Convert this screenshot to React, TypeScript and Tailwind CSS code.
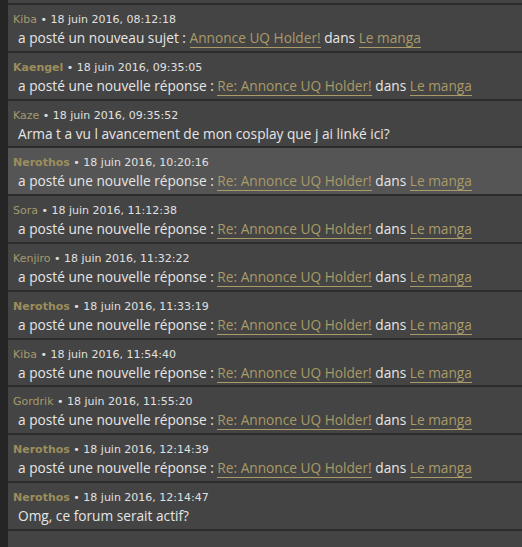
import React from "react";

type Row = {
  user: string;
  bold?: boolean;
  date: string;
  kind: "sujet" | "reponse" | "msg";
  msg?: string;
  hl?: boolean;
};

const rows: Row[] = [
  { user: "Kiba", date: "18 juin 2016, 08:12:18", kind: "sujet" },
  { user: "Kaengel", bold: true, date: "18 juin 2016, 09:35:05", kind: "reponse" },
  { user: "Kaze", date: "18 juin 2016, 09:35:52", kind: "msg", msg: "Arma t a vu l avancement de mon cosplay que j ai linké ici?" },
  { user: "Nerothos", bold: true, date: "18 juin 2016, 10:20:16", kind: "reponse", hl: true },
  { user: "Sora", date: "18 juin 2016, 11:12:38", kind: "reponse" },
  { user: "Kenjiro", date: "18 juin 2016, 11:32:22", kind: "reponse" },
  { user: "Nerothos", bold: true, date: "18 juin 2016, 11:33:19", kind: "reponse" },
  { user: "Kiba", date: "18 juin 2016, 11:54:40", kind: "reponse" },
  { user: "Gordrik", date: "18 juin 2016, 11:55:20", kind: "reponse" },
  { user: "Nerothos", bold: true, date: "18 juin 2016, 12:14:39", kind: "reponse" },
  { user: "Nerothos", bold: true, date: "18 juin 2016, 12:14:47", kind: "msg", msg: "Omg, ce forum serait actif?" },
];

const linkCls = "text-[#a99a68] border-b border-[#a99a68]";

export default function App() {
  return (
    <div className="flex min-h-[547px] w-[522px] bg-[#262626]">
      <div className="w-[8px] shrink-0 bg-[#252525]" />
      <div className="flex-1 bg-[#444444] pt-[3px]">
        <div className="flex flex-col">
          {rows.map((r, i) => (
            <div
              key={i}
              className={`h-[47.8px] border-t-[2px] border-[#2c2c2c] ${r.hl ? "bg-[#555555]" : "bg-[#444444]"} pl-[5px] pt-[8px]`}
              style={{ fontFamily: "'DejaVu Sans', Verdana, sans-serif" }}
            >
              <div className="text-[11px] leading-[14px] text-[#e0e0e0]">
                <span className={r.bold ? "font-bold text-[#9c8e5c]" : "text-[#a39a6c]"}>{r.user}</span>
                <span> • {r.date}</span>
              </div>
              <div
                className="mt-[2px] pl-[5px] text-[13.7px] leading-[18px] text-[#e6e6e6] whitespace-nowrap"
                style={{ fontFamily: "'Open Sans', 'Noto Sans', sans-serif" }}
              >
                {r.kind === "sujet" && (
                  <>
                    a posté un nouveau sujet : <span className={linkCls}>Annonce UQ Holder!</span> dans{" "}
                    <span className={linkCls}>Le manga</span>
                  </>
                )}
                {r.kind === "reponse" && (
                  <>
                    a posté une nouvelle réponse : <span className={linkCls}>Re: Annonce UQ Holder!</span> dans{" "}
                    <span className={linkCls}>Le manga</span>
                  </>
                )}
                {r.kind === "msg" && <>{r.msg}</>}
              </div>
            </div>
          ))}
          <div className="border-t-[2px] border-[#2c2c2c] h-[20px]" />
        </div>
      </div>
    </div>
  );
}
